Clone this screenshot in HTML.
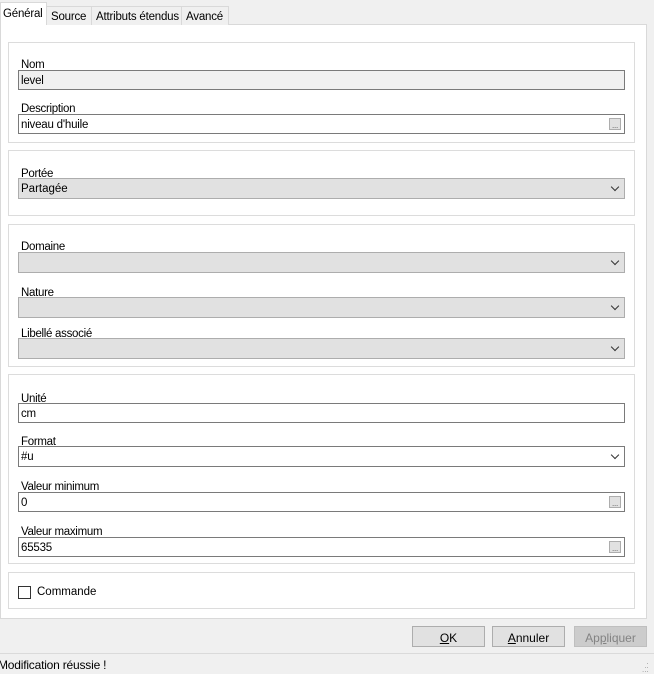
<!DOCTYPE html>
<html><head><meta charset="utf-8"><style>
*{box-sizing:border-box;margin:0;padding:0}
body{width:654px;height:674px;background:#f0f0f0;font-family:"Liberation Sans",sans-serif;font-size:12px;color:#000;position:relative;overflow:hidden}
.a{position:absolute}
.page{left:0;top:24px;width:647px;height:595px;background:#fff;border:1px solid #d9d9d9}
.g{position:absolute;left:8px;width:627px;border:1px solid #dcdcdc;background:#fff}
.lb{position:absolute;left:21px;font-size:11.5px;letter-spacing:-.3px;margin-top:2px}
.f{position:absolute;left:18px;width:607px;height:20px;border:1px solid #7a7a7a;background:#fff;padding:4px 0 0 2px;font-size:11.5px;letter-spacing:-.2px}
.f.ro{background:#f0f0f0}
.c{position:absolute;left:18px;width:607px;height:21px;border:1px solid #adadad;background:#e1e1e1;padding:4px 0 0 2px;font-size:11.5px}
.c:after{content:"";position:absolute;right:6px;top:5px;width:5px;height:5px;border-right:1px solid #333;border-bottom:1px solid #333;transform:rotate(45deg)}
.f.c2{border-color:#7a7a7a;background:#fff}
.dots{position:absolute;right:3px;top:3px;width:12px;height:12px;border:1px solid #adadad;background:#e1e1e1;font-size:8px;line-height:14px;text-align:center;color:#555;overflow:hidden}
.tab{position:absolute;top:6px;height:19px;border:1px solid #d9d9d9;border-bottom:none;background:#f0f0f0;font-size:11.5px;padding:4px 0 0 4px;letter-spacing:-.2px}
.btn{position:absolute;top:626px;height:21px;border:1px solid #adadad;background:#e1e1e1;text-align:center;padding-top:4px;font-size:12px}
</style></head><body>
<div class="a page"></div>
<div class="tab" style="left:46px;width:46px">Source</div>
<div class="tab" style="left:91px;width:91px">Attributs étendus</div>
<div class="tab" style="left:181px;width:48px">Avancé</div>
<div class="tab" style="left:0;top:2px;height:23px;width:47px;background:#fff;padding:5px 0 0 2px">Général</div>

<div class="g" style="top:42px;height:101px"></div>
<div class="lb" style="top:57px">Nom</div>
<div class="f ro" style="top:70px">level</div>
<div class="lb" style="top:101px">Description</div>
<div class="f" style="top:114px">niveau d'huile<div class="dots">...</div></div>

<div class="g" style="top:150px;height:66px"></div>
<div class="lb" style="top:166px">Portée</div>
<div class="c" style="top:178px">Partagée</div>

<div class="g" style="top:224px;height:143px"></div>
<div class="lb" style="top:239px">Domaine</div>
<div class="c" style="top:252px"></div>
<div class="lb" style="top:285px">Nature</div>
<div class="c" style="top:297px"></div>
<div class="lb" style="top:326px">Libellé associé</div>
<div class="c" style="top:338px"></div>

<div class="g" style="top:374px;height:190px"></div>
<div class="lb" style="top:391px">Unité</div>
<div class="f" style="top:403px">cm</div>
<div class="lb" style="top:434px">Format</div>
<div class="c f c2" style="top:446px">#u</div>
<div class="lb" style="top:479px">Valeur minimum</div>
<div class="f" style="top:492px">0<div class="dots">...</div></div>
<div class="lb" style="top:524px">Valeur maximum</div>
<div class="f" style="top:537px">65535<div class="dots">...</div></div>

<div class="g" style="top:572px;height:37px"></div>
<div class="a" style="left:18px;top:586px;width:13px;height:13px;border:1px solid #333;background:#fff"></div>
<div class="a" style="left:37px;top:586px;font-size:11.5px">Commande</div>

<div class="btn" style="left:412px;width:73px"><u>O</u>K</div>
<div class="btn" style="left:492px;width:73px"><u>A</u>nnuler</div>
<div class="btn" style="left:574px;width:73px;background:#cccccc;border-color:#bfbfbf;color:#838383">Ap<u>p</u>liquer</div>

<div class="a" style="left:0;top:653px;width:654px;height:1px;background:#dadada"></div>
<div class="a" style="left:-2px;top:658px;font-size:12px;letter-spacing:-.2px">Modification réussie !</div>
<div class="a" style="left:642px;top:660px;font-size:8px;color:#999;line-height:4px">&nbsp;&nbsp;.<br>&nbsp;..<br>...</div>
</body></html>
